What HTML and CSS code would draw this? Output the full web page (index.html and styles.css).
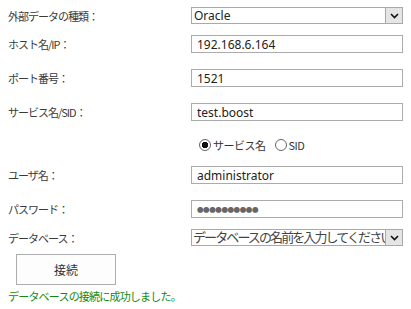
FILE: index.html
```html
<!DOCTYPE html>
<html lang="ja">
<head>
  <meta charset="UTF-8">
  <title>外部データ接続</title>
  <link rel="stylesheet" href="styles.css">
</head>
<body>
  <div class="form">
    <!-- データの種類 -->
    <div class="row pick-row">
      <label class="label">外部データの種類：</label>
      <div class="picker">
        <span class="picker-value">Oracle</span>
        <span class="picker-arrow">
          <svg width="9" height="6" viewBox="0 0 9 6"><path d="M1 1 L4.5 4.5 L8 1" fill="none" stroke="#111" stroke-width="1.6"/></svg>
        </span>
      </div>
    </div>

    <div class="row">
      <label class="label">ホスト名/IP：</label>
      <input class="field" type="text" value="192.168.6.164">
    </div>

    <div class="row">
      <label class="label">ポート番号：</label>
      <input class="field" type="text" value="1521">
    </div>

    <div class="row">
      <label class="label">サービス名/SID：</label>
      <input class="field" type="text" value="test.boost">
    </div>

    <!-- サービス名 / SID -->
    <div class="row radio-row">
      <span></span>
      <div class="radios">
        <label class="radio"><input type="radio" name="kind" checked>サービス名</label>
        <label class="radio"><input type="radio" name="kind">SID</label>
      </div>
    </div>

    <div class="row">
      <label class="label">ユーザ名：</label>
      <input class="field" type="text" value="administrator">
    </div>

    <div class="row pass-row">
      <label class="label">パスワード：</label>
      <div class="field dots">●●●●●●●●●●</div>
    </div>

    <div class="row db-row">
      <label class="label">データベース：</label>
      <div class="picker">
        <span class="picker-value db-value">データベースの名前を入力してください</span>
        <span class="picker-arrow">
          <svg width="9" height="6" viewBox="0 0 9 6"><path d="M1 1 L4.5 4.5 L8 1" fill="none" stroke="#111" stroke-width="1.6"/></svg>
        </span>
      </div>
    </div>

    <button class="button">接続</button>
    <p class="message">データベースの接続に成功しました。</p>
  </div>
</body>
</html>
```

FILE: styles.css
```css
body {
  margin: 0;
  font-family: "Noto Sans CJK JP", sans-serif;
  background-color: #fff;
  color: #333;
}

.form {
  padding: 7px 8px;
}

.row {
  display: grid;
  grid-template-columns: 183px 212px;
  align-items: center;
  margin-bottom: 16px;
}

.pick-row,
.pass-row {
  margin-bottom: 11px;
}

.db-row {
  margin-bottom: 8px;
}

.radio-row {
  height: 16px;
  margin-bottom: 13px;
}

.label {
  font-size: 11px;
  letter-spacing: -1px;
  line-height: 16px;
  color: #3a3a3a;
}

.field {
  box-sizing: border-box;
  width: 212px;
  height: 18px;
  margin: 0;
  padding: 0 5px;
  border: 1px solid #ababab;
  font-family: "Noto Sans", "Noto Sans CJK JP", sans-serif;
  font-size: 12px;
  color: #222;
  outline: none;
}

.dots {
  display: flex;
  align-items: center;
  font-size: 6.5px;
  letter-spacing: -0.4px;
  color: #666;
}

.picker {
  box-sizing: border-box;
  display: flex;
  width: 212px;
  height: 17px;
  border: 1px solid #a9a9a9;
  background-color: #fff;
}

.picker-value {
  flex: 1;
  overflow: hidden;
  white-space: nowrap;
  padding-left: 2px;
  font-family: "Noto Sans", "Noto Sans CJK JP", sans-serif;
  font-size: 12px;
  line-height: 15px;
  color: #222;
}

.db-value {
  padding-left: 1px;
  font-size: 13px;
  letter-spacing: -1.9px;
  color: #444;
}

.picker-arrow {
  box-sizing: border-box;
  width: 17px;
  margin: 0;
  display: flex;
  align-items: center;
  justify-content: center;
  background-color: #e5e5e5;
  border-left: 1px solid #a9a9a9;
}

.radios {
  display: flex;
  gap: 9px;
  padding-left: 8px;
  font-size: 11px;
  letter-spacing: -0.5px;
  color: #333;
}

.radio {
  display: flex;
  align-items: center;
}

.radio input {
  appearance: none;
  box-sizing: border-box;
  width: 12px;
  height: 12px;
  margin: 0 2px 0 0;
  border: 1px solid #666;
  border-radius: 50%;
  background-color: #fff;
}

.radio input:checked {
  background: radial-gradient(circle, #111 0 3px, #fff 3.5px);
}

.button {
  display: block;
  width: 100px;
  height: 31px;
  margin-left: 8px;
  border: 1px solid #adadad;
  background-color: #fdfdfd;
  font-family: "Noto Sans CJK JP", sans-serif;
  font-size: 12px;
  color: #333;
}

.message {
  margin: 3px 0 0;
  font-size: 11px;
  letter-spacing: -0.8px;
  line-height: 16px;
  color: #0f8a0f;
}
```
